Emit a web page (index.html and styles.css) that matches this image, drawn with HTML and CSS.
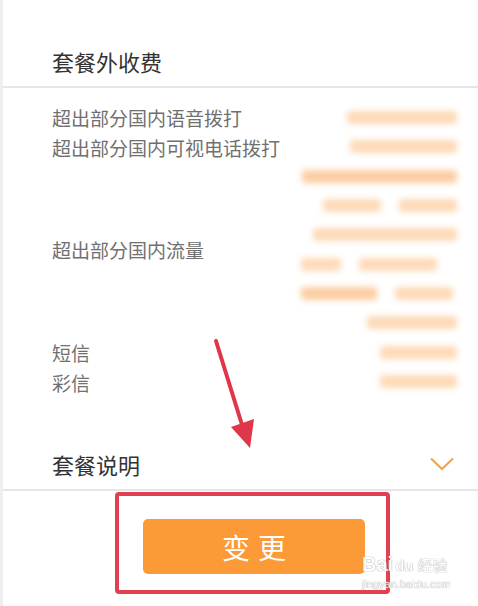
FILE: index.html
```html
<!DOCTYPE html>
<html lang="zh-CN">
<head>
<meta charset="utf-8">
<title>套餐外收费</title>
<link rel="stylesheet" href="styles.css">
</head>
<body>
<div class="page">
  <div class="section-head">
    <h2 class="title">套餐外收费</h2>
  </div>

  <div class="details">
    <div class="labels">
      <div class="label">超出部分国内语音拨打</div>
      <div class="label">超出部分国内可视电话拨打</div>
      <div class="label label-flow">超出部分国内流量</div>
      <div class="label label-sms">短信</div>
      <div class="label">彩信</div>
    </div>
    <div class="values">
      <div class="vline"><span class="bar" style="width:110px"></span></div>
      <div class="vline"><span class="bar" style="width:107px"></span></div>
      <div class="vline"><span class="bar strong" style="width:155px"></span></div>
      <div class="vline"><span class="bar" style="width:58px"></span><span class="bar" style="width:58px"></span></div>
      <div class="vline"><span class="bar" style="width:144px"></span></div>
      <div class="vline shift20"><span class="bar" style="width:40px"></span><span class="bar" style="width:78px"></span></div>
      <div class="vline shift4"><span class="bar strong" style="width:76px"></span><span class="bar" style="width:58px"></span></div>
      <div class="vline"><span class="bar" style="width:90px"></span></div>
      <div class="vline"><span class="bar" style="width:77px"></span></div>
      <div class="vline"><span class="bar" style="width:77px"></span></div>
    </div>
  </div>

  <div class="section-foot">
    <h2 class="title">套餐说明</h2>
    <svg class="chevron" width="24" height="14" viewBox="0 0 24 14">
      <polyline points="1,1.5 12,12 23,1.5" fill="none" stroke="#f3a24a" stroke-width="2"/>
    </svg>
  </div>

  <div class="action">
    <div class="highlight">
      <button class="change-btn">变更</button>
    </div>
  </div>

  <svg class="arrow" width="478" height="606" viewBox="0 0 478 606">
    <line x1="216" y1="341" x2="243" y2="428" stroke="#e0364a" stroke-width="4" stroke-linecap="round"/>
    <polygon points="231,427 254,419 250,448" fill="#e0364a"/>
  </svg>

  <div class="watermark">
    <div class="wm-top"><span>Bai</span><span class="paw">du</span><span class="wm-cn">经验</span></div>
    <div class="wm-url">jingyan.baidu.com</div>
  </div>
</div>
</body>
</html>
```

FILE: styles.css
```css
* {
  box-sizing: border-box;
}

html, body {
  margin: 0;
  padding: 0;
  background: #ffffff;
}

body {
  font-family: "Noto Sans CJK SC", "Noto Sans", sans-serif;
}

.page {
  position: relative;
  width: 478px;
  height: 606px;
  border-left: 3px solid #efefef;
  overflow: hidden;
}

.title {
  margin: 0;
  font-size: 22px;
  line-height: 30px;
  font-weight: 400;
  color: #333333;
}

.section-head {
  padding: 46px 0 10px 49px;
  border-bottom: 2px solid #e6e6e6;
}

.details {
  display: flex;
  justify-content: space-between;
  padding: 15px 21px 0 49px;
}

.labels {
  display: flex;
  flex-direction: column;
}

.label {
  font-size: 19px;
  line-height: 30px;
  color: #707070;
  white-space: nowrap;
}

.label-flow {
  margin-top: 72px;
}

.label-sms {
  margin-top: 73px;
}

.values {
  display: flex;
  flex-direction: column;
  align-items: flex-end;
}

.vline {
  height: 29.3px;
  display: flex;
  align-items: center;
  justify-content: flex-end;
  gap: 18px;
}

.vline.shift20 {
  margin-right: 20px;
}

.vline.shift4 {
  margin-right: 4px;
}

.bar {
  display: block;
  height: 13px;
  background: #fdd3ab;
  border-radius: 3px;
  filter: blur(3px);
  opacity: 0.85;
}

.bar.strong {
  background: #fbc490;
}

.section-foot {
  display: flex;
  align-items: center;
  justify-content: space-between;
  padding: 51px 24px 10px 49px;
  border-bottom: 2px solid #e6e6e6;
}

.chevron {
  display: block;
  margin-top: 0;
}

.action {
  padding: 1px 0 0 112px;
}

.highlight {
  width: 275px;
  height: 102px;
  border: 4px solid #e0404f;
  border-radius: 4px;
  padding: 23px 21px 0 24px;
}

.change-btn {
  display: block;
  width: 222px;
  height: 55px;
  border: none;
  border-radius: 5px;
  background: #fb9a36;
  color: #ffffff;
  font-family: "Noto Sans CJK SC", "Noto Sans", sans-serif;
  font-size: 28px;
  letter-spacing: 8px;
  text-indent: 8px;
  padding: 0;
}

.arrow {
  position: absolute;
  left: -3px;
  top: 0;
  pointer-events: none;
}

.watermark {
  position: absolute;
  left: 359px;
  top: 553px;
  color: #ffffff;
  font-family: "Liberation Sans", Arial, sans-serif;
  text-shadow: 0 0 1px #9a9a9a, 0 0 1px #9a9a9a;
  opacity: 0.9;
}

.wm-top {
  display: flex;
  align-items: baseline;
  font-size: 20px;
  font-weight: 700;
  line-height: 22px;
}

.paw {
  font-size: 15px;
  margin-left: 2px;
}

.wm-cn {
  font-family: "Noto Sans CJK SC", sans-serif;
  font-size: 15px;
  font-weight: 400;
  margin-left: 4px;
}

.wm-url {
  font-size: 11px;
  line-height: 14px;
}
```
